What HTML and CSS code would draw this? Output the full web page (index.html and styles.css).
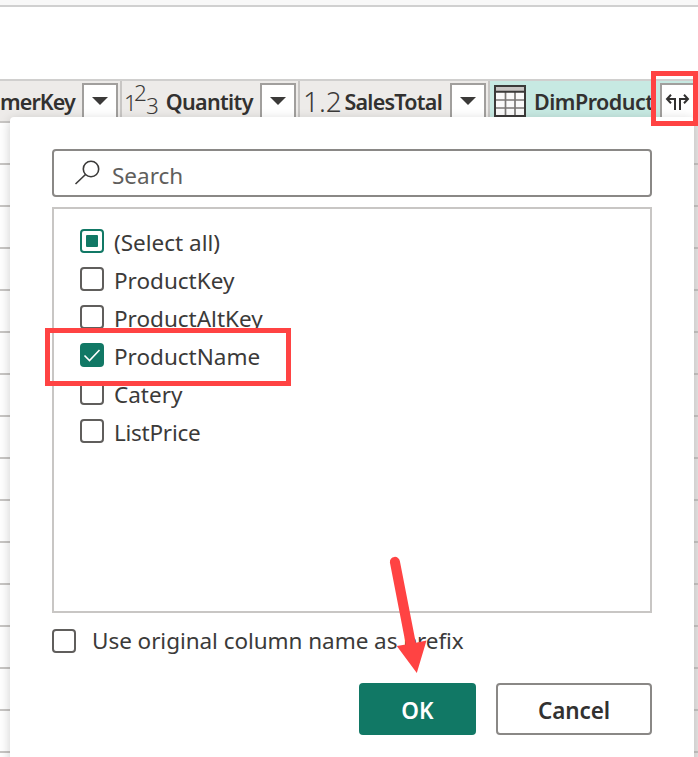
FILE: index.html
```html
<!DOCTYPE html>
<html lang="en">
<head>
<meta charset="utf-8">
<title>Expand column</title>
<link rel="stylesheet" href="styles.css">
</head>
<body>
<div class="formula-bar"></div>
<div class="grid">
  <div class="head">
    <div class="col col-key"><span class="name n-key">merKey</span><span class="drop"><i></i></span></div>
    <div class="col col-qty"><span class="type whole"><span class="one">1</span><span class="up">2</span><span class="down">3</span></span><span class="name n-qty">Quantity</span><span class="drop"><i></i></span></div>
    <div class="col col-total"><span class="type dec">1.2</span><span class="name n-total">SalesTotal</span><span class="drop"><i></i></span></div>
    <div class="col col-product">
      <svg class="table-icon" width="32" height="32" viewBox="0 0 32 32"><path fill="#fafafa" d="M1 1h30v30H1z"/><path fill="#c8c6c4" d="M1 1h30v5H1z"/><path d="M11.5 7v24M21 7v24M1 15h30M1 23h30" stroke="#797775" stroke-width="1.7"/><path d="M1 1h30v30H1zM1 6.8h30" fill="none" stroke="#3b3a39" stroke-width="2"/></svg>
      <span class="name n-product">DimProduct</span>
      <span class="drop expand"><svg width="26" height="20" viewBox="0 0 26 20" fill="none" stroke="#323130" stroke-width="2"><path d="M10 17V6H2M6 1.7 2 6l4 4.3M15 17V6h8M19 1.7 23 6l-4 4.3"/></svg></span>
    </div>
  </div>
  <div class="rows"><div class="selected-column"></div></div>
</div>

<div class="popup">
  <div class="search">
    <svg width="28" height="28" viewBox="0 0 28 28" fill="none" stroke="#3b3a39" stroke-width="1.6"><circle cx="17" cy="11" r="7.7"/><path d="M11.5 16.5 1.5 26"/></svg>
    <span>Search</span>
  </div>
  <div class="list">
    <div class="item"><span class="box partial"></span><span class="t-all">(Select all)</span></div>
    <div class="item"><span class="box"></span><span>ProductKey</span></div>
    <div class="item"><span class="box"></span><span>ProductAltKey</span></div>
    <div class="item"><span class="box checked"><svg width="24" height="24" viewBox="0 0 24 24"><path d="m4.5 12.5 5 5L19.5 7" fill="none" stroke="#fff" stroke-width="1.6"/></svg></span><span>ProductName</span></div>
    <div class="item"><span class="box"></span><span>Catery</span></div>
    <div class="item"><span class="box"></span><span class="t-price">ListPrice</span></div>
  </div>
  <div class="prefix"><span class="box"></span><span>Use original column name as prefix</span></div>
  <div class="actions"><div class="btn ok">OK</div><div class="btn cancel">Cancel</div></div>
</div>

<div class="mark mark-expand"></div>
<div class="mark mark-item"></div>
<svg class="arrow" width="50" height="120" viewBox="385 555 50 120"><path d="M389.9 562.5a5 5 0 0 1 10-1.2L415.8 642.8 426.5 640.6 416.8 673 396.8 646 405.8 644.5Z" fill="#ff4343"/></svg>
</body>
</html>
```
FILE: styles.css
```css
* { box-sizing: border-box; }
html, body { height: 757px; overflow: hidden; }
body {
  margin: 0;
  position: relative;
  background: #fff;
  color: #3b3a39;
  font: 22.5px/30px "Noto Sans", "Open Sans", sans-serif;
  white-space: nowrap;
}
.formula-bar { height: 7px; background: #f8f8f8; border-bottom: 2px solid #d0d0d0; }
.grid { margin-top: 72px; }
.head { display: flex; height: 42px; border-top: 2px solid #d0cfce; background: #edebe9; }
.col { display: flex; align-items: flex-start; flex: none; padding-top: 2px; border-right: 2px solid #c8c6c4; }
.col-key { width: 122px; }
.col-qty { width: 178px; padding-left: 3px; }
.col-total { width: 190px; padding-left: 3px; }
.col-product { width: 208px; padding-left: 4px; background: #c7e9e2; border: 0; }
.name { margin-top: 4px; font-weight: 600; font-size: 21.5px; letter-spacing: -.65px; color: #323130; }
.n-key { width: 82px; letter-spacing: -.9px; }
.n-qty { width: 95px; }
.n-total { width: 107px; margin-left: 1px; letter-spacing: -.75px; }
.n-product { width: 118px; margin-left: 8px; letter-spacing: -.5px; }
.type { display: flex; width: 41px; font-size: 28px; font-weight: 350; line-height: 36px; }
.whole { font-size: 22.5px; line-height: 24px; }
.one { width: 13px; margin-left: -1px; margin-top: 8px; }
.up { width: 12px; margin-top: -2px; margin-left: -3px; }
.down { margin-top: 11px; }
.dec { width: 41px; }
.drop {
  display: flex; justify-content: center; flex: none;
  width: 36px; height: 38px; margin-left: auto; margin-right: 2px;
  border: 2px solid #a19f9d; background: #fff;
}
.drop i { width: 0; height: 0; margin-top: 12px; border: 8px solid transparent; border-top-color: #3b3a39; border-bottom: 0; }
.expand { width: 38px; margin-right: 0; }
.expand svg { margin-top: 8px; margin-right: 2px; flex: none; }
.table-icon { margin-top: 2px; flex: none; }
.rows {
  height: 636px;
  background: repeating-linear-gradient(#c8c6c4 0 2px, #fff 2px 42px);
}
.selected-column {
  width: 208px; height: 636px; margin-left: auto;
  background: repeating-linear-gradient(#c8c6c4 0 2px, #e9e7e6 2px 42px);
}
.popup {
  position: absolute; left: 10px; top: 117px; width: 684px; height: 660px;
  padding: 32px 42px; background: #fff; border-radius: 4px;
  box-shadow: 0 3px 12px rgba(0,0,0,.2);
}
.search {
  display: flex; align-items: center; height: 48px; padding-left: 20px;
  border: 2px solid #8a8886; border-radius: 4px; color: #605e5c;
}
.search svg { margin-bottom: 2px; }
.search span { margin-left: 10px; padding-top: 5px; }
.list { height: 406px; margin-top: 10px; padding: 13px 26px; border: 2px solid #c8c6c4; }
.item { display: flex; align-items: center; height: 38px; gap: 10px; }
.item span:last-child { padding-top: 3px; }
.item .t-price { letter-spacing: -.25px; }
.box { display: block; flex: none; width: 24px; height: 24px; border: 2px solid #605e5c; border-radius: 4px; }
.partial { padding: 4px; border-color: #117865; }
.partial::before { content: ""; display: block; width: 12px; height: 12px; background: #117865; border-radius: 1px; }
.checked { border: 0; background: #117865; }
.checked svg { display: block; }
.prefix { display: flex; align-items: center; gap: 16px; height: 30px; margin-top: 13px; letter-spacing: -.05px; }
.actions { display: flex; justify-content: flex-end; gap: 20px; margin-top: 27px; }
.btn { height: 52px; border-radius: 4px; text-align: center; font-weight: 600; line-height: 56px; }
.ok { width: 117px; background: #117865; color: #fff; }
.cancel { width: 156px; border: 2px solid #8a8886; line-height: 52px; color: #323130; letter-spacing: -.1px; }
.mark { position: absolute; border: 5px solid #ff4343; }
.mark-expand { left: 651px; top: 71px; width: 47px; height: 55px; }
.mark-item { left: 45px; top: 328px; width: 246px; height: 58px; }
.arrow { position: absolute; left: 385px; top: 555px; }
```
